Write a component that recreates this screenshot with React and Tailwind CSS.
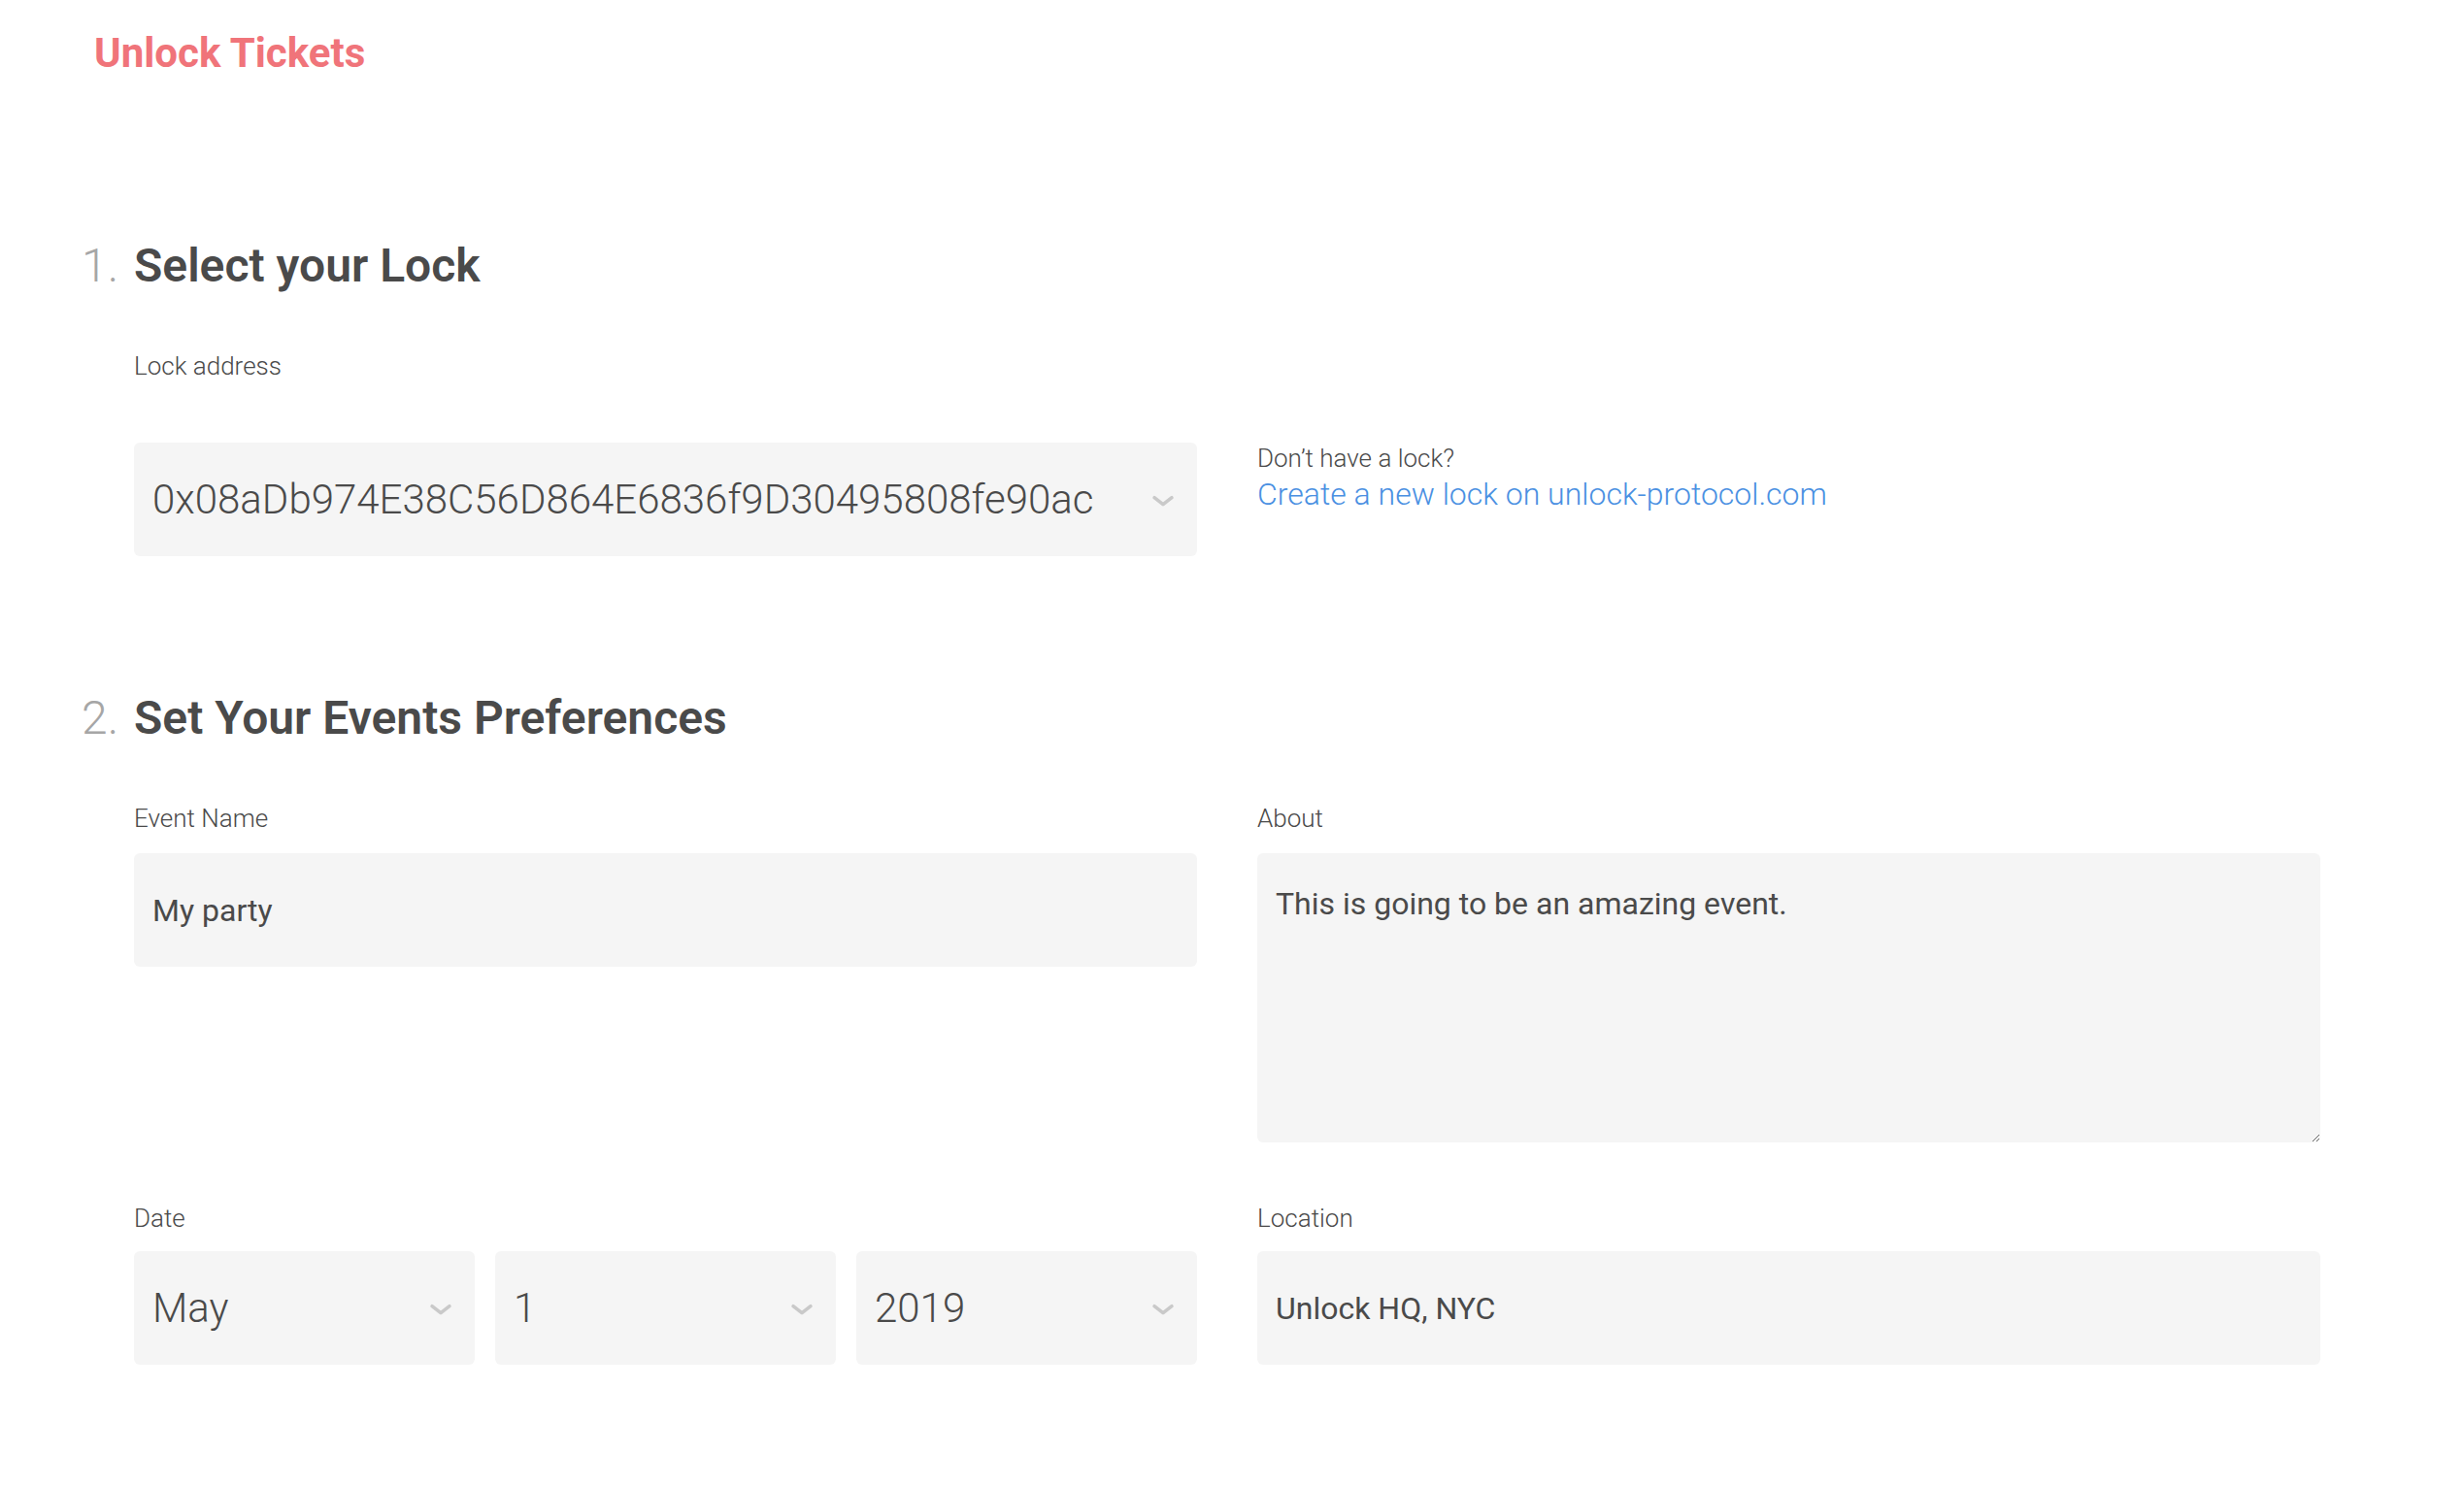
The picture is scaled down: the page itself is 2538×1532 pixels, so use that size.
const months = ['January', 'February', 'March', 'April', 'May', 'June', 'July', 'August', 'September', 'October', 'November', 'December']

function Chevron() {
  return (
    <svg
      viewBox="0 0 24 12"
      className="pointer-events-none absolute right-[23px] top-1/2 h-[12px] w-[24px] -translate-y-[40%]"
      fill="none"
      stroke="#c9c9c9"
      strokeWidth="3.5"
      strokeLinecap="round"
      strokeLinejoin="round"
    >
      <path d="M3 2.5 L12 9.5 L21 2.5" />
    </svg>
  )
}

function Label({ children }) {
  return <p className="text-[26px] font-light leading-[32px] text-[#4a4a4a]">{children}</p>
}

function SelectBox({ value, options }) {
  return (
    <div className="relative">
      <select
        value={value}
        onChange={() => {}}
        className="h-[117px] w-full appearance-none rounded-md bg-[#f5f5f5] pl-[19px] pr-[60px] text-[42px] font-light text-[#4a4a4a] outline-none"
        style={{ fontFamily: 'inherit' }}
      >
        {options.map((opt) => (
          <option key={opt} value={opt}>
            {opt}
          </option>
        ))}
      </select>
      <Chevron />
    </div>
  )
}

function SectionTitle({ number, children, className = '' }) {
  return (
    <h2 className={`flex items-baseline text-[48px] leading-[60px] ${className}`}>
      <span className="w-[54px] font-light text-[#a6a6a6]">{number}.</span>
      <span className="font-semibold text-[#4a4a4a]">{children}</span>
    </h2>
  )
}

export default function App() {
  const lockAddress = '0x08aDb974E38C56D864E6836f9D30495808fe90ac'
  const days = Array.from({ length: 31 }, (_, i) => String(i + 1))

  return (
    <div className="min-h-screen bg-white font-['Roboto','Liberation_Sans',sans-serif] text-[#4a4a4a]">
      <header className="pl-[97px] pt-[30px]">
        <h1 className="text-[42px] font-bold leading-[50px] text-[#f0747a]">Unlock Tickets</h1>
      </header>

      <main className="pl-[84px]">
        <SectionTitle number="1" className="mt-[164px]">
          Select your Lock
        </SectionTitle>

        <div className="pl-[54px]">
          <div className="mt-[57px]">
            <Label>Lock address</Label>
          </div>
          <div className="mt-[63px] grid w-[2252px] grid-cols-2 gap-x-[62px]">
            <SelectBox value={lockAddress} options={[lockAddress]} />
            <div>
              <p className="text-[26px] font-light leading-[32px] text-[#4a4a4a]">Don’t have a lock?</p>
              <a href="#" className="mt-px block text-[32px] font-light leading-[40px] text-[#4a90e2]">
                Create a new lock on unlock-protocol.com
              </a>
            </div>
          </div>
        </div>

        <SectionTitle number="2" className="mt-[137px]">
          Set Your Events Preferences
        </SectionTitle>

        <div className="pl-[54px]">
          <div className="mt-[57px] grid w-[2252px] grid-cols-2 gap-x-[62px]">
            <div>
              <Label>Event Name</Label>
              <input
                readOnly
                value="My party"
                className="mt-[20px] h-[117px] w-full rounded-md bg-[#f5f5f5] px-[19px] text-[32px] text-[#4a4a4a] outline-none"
              />
            </div>
            <div>
              <Label>About</Label>
              <textarea
                readOnly
                value="This is going to be an amazing event."
                className="mt-[20px] block h-[298px] w-full rounded-md bg-[#f5f5f5] px-[19px] pt-[32px] text-[32px] leading-[40px] text-[#4a4a4a] outline-none"
              />
            </div>
          </div>

          <div className="mt-[62px] grid w-[2252px] grid-cols-2 gap-x-[62px]">
            <div>
              <Label>Date</Label>
              <div className="mt-[18px] grid grid-cols-3 gap-x-[21px]">
                <SelectBox value="May" options={months} />
                <SelectBox value="1" options={days} />
                <SelectBox value="2019" options={['2018', '2019', '2020']} />
              </div>
            </div>
            <div>
              <Label>Location</Label>
              <input
                readOnly
                value="Unlock HQ, NYC"
                className="mt-[18px] h-[117px] w-full rounded-md bg-[#f5f5f5] px-[19px] text-[32px] text-[#4a4a4a] outline-none"
              />
            </div>
          </div>
        </div>
      </main>
    </div>
  )
}
